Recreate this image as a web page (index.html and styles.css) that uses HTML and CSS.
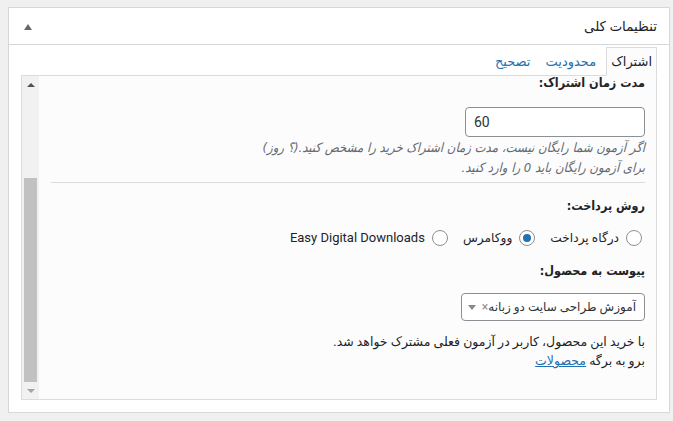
FILE: index.html
```html
<!DOCTYPE html>
<html lang="fa" dir="rtl">
<head>
<meta charset="utf-8">
<title>تنظیمات کلی</title>
<link rel="stylesheet" href="styles.css">
</head>
<body>
<div class="screen">
  <div class="postbox">
    <div class="postbox-header">
      <h2 class="hndle">تنظیمات کلی</h2>
      <span class="toggle" aria-hidden="true"></span>
    </div>
    <div class="inside">
      <ul class="tabs">
        <li class="tab active">اشتراک</li>
        <li class="tab"><a href="#">محدودیت</a></li>
        <li class="tab"><a href="#">تصحیح</a></li>
      </ul>
      <div class="panel">
        <div class="panel-content">
          <label class="field-label first">مدت زمان اشتراک:</label>
          <div class="input-row"><input class="num-input" type="text" value="60" dir="ltr"></div>
          <p class="description">اگر آزمون شما رایگان نیست، مدت زمان اشتراک خرید را مشخص کنید.(؟ روز)<br>برای آزمون رایگان باید 0 را وارد کنید.</p>
          <hr class="sep">
          <label class="field-label">روش پرداخت:</label>
          <div class="radios">
            <label class="radio-item"><span class="radio"></span>درگاه پرداخت</label>
            <label class="radio-item"><span class="radio checked"></span>ووکامرس</label>
            <label class="radio-item"><span class="radio"></span><span class="latin">Easy Digital Downloads</span></label>
          </div>
          <label class="field-label">پیوست به محصول:</label>
          <div class="select-row">
            <div class="select2">
              <span class="sel-text">آموزش طراحی سایت دو زبانه</span>
              <span class="sel-clear">×</span>
              <span class="sel-arrow"></span>
            </div>
          </div>
          <p class="note">با خرید این محصول، کاربر در آزمون فعلی مشترک خواهد شد.<br>برو به برگه <a href="#" class="link">محصولات</a></p>
        </div>
        <div class="scrollbar" aria-hidden="true">
          <div class="sb-btn"><span class="sb-up"></span></div>
          <div class="sb-track"><div class="sb-thumb"></div></div>
          <div class="sb-btn"><span class="sb-down"></span></div>
        </div>
      </div>
    </div>
  </div>
</div>
</body>
</html>
```
FILE: styles.css
```css
* { box-sizing: border-box; }
html, body { margin: 0; padding: 0; }
body {
  background: #f0f0f1;
  font-family: Roboto, "DejaVu Sans", sans-serif;
  font-size: 13px;
  color: #1d2327;
  width: 673px;
  height: 421px;
  overflow: hidden;
}
.screen {
  padding: 7px 0 0 8px;
  direction: ltr;
}
.postbox {
  direction: rtl;
  width: 662px;
  height: 406px;
  background: #fff;
  border: 1px solid #d6d7d9;
}
.postbox-header {
  height: 37px;
  border-bottom: 1px solid #d6d7d9;
  display: flex;
  align-items: center;
  justify-content: space-between;
  padding: 0 12px 0 15px;
}
.hndle {
  margin: 0;
  font-size: 13.5px;
  font-weight: 400;
  line-height: 20px;
  color: #1d2327;
}
.toggle {
  width: 0;
  height: 0;
  border-left: 4px solid transparent;
  border-right: 4px solid transparent;
  border-bottom: 6px solid #646970;
  margin-top: 1px;
}
.inside {
  padding: 2px 12px 12px 12px;
}
.tabs {
  list-style: none;
  margin: 0 0 -1px 0;
  padding: 0;
  display: flex;
  gap: 5px;
  position: relative;
  z-index: 1;
}
.tab {
  padding: 5px 4px;
  line-height: 17px;
  border: 1px solid transparent;
  font-size: 13px;
}
.tab.active {
  border-color: #dcdcde;
  border-bottom-color: #fcfcfc;
  background: #fcfcfc;
  color: #1d2327;
}
.tab a { color: #2271b1; text-decoration: none; }
.panel {
  height: 325px;
  border: 1px solid #dcdcde;
  background: #fcfcfc;
  display: flex;
  overflow: hidden;
}
.panel-content {
  flex: 1;
  padding: 0 11px 0 12px;
}
.field-label {
  display: block;
  font-family: "DejaVu Sans Condensed", "DejaVu Sans", sans-serif;
  font-weight: 700;
  font-size: 12.5px;
  line-height: 20px;
  color: #1d2327;
  margin-top: 13px;
}
.field-label.first { margin-top: -3px; }
.input-row { margin-top: 14px; }
.num-input {
  display: block;
  width: 180px;
  height: 30px;
  border: 1px solid #8c8f94;
  border-radius: 4px;
  background: #fff;
  font-family: Roboto, "DejaVu Sans", sans-serif;
  font-size: 14px;
  color: #2c3338;
  padding: 0 8px;
  text-align: left;
  margin: 0;
}
.description {
  margin: 1px 0 0 0;
  font-family: "DejaVu Sans Condensed", "DejaVu Sans", sans-serif;
  font-style: italic;
  color: #646970;
  line-height: 20px;
  font-size: 13px;
}
.sep {
  margin: 4px 0 0 0;
  border: 0;
  border-top: 1px solid #dcdcde;
  height: 0;
}
.radios {
  margin-top: 12px;
  display: flex;
  align-items: center;
  line-height: 20px;
  font-size: 12.2px;
}
.radio-item {
  display: flex;
  align-items: center;
  margin-left: 12px;
  color: #1d2327;
}
.radio {
  width: 16px;
  height: 16px;
  border: 1px solid #8c8f94;
  border-radius: 50%;
  background: #fff;
  margin: 0 3px 0 7px;
  display: flex;
  align-items: center;
  justify-content: center;
}
.radio.checked::after {
  content: "";
  width: 8px;
  height: 8px;
  border-radius: 50%;
  background: #2271b1;
}
.latin { font-family: Roboto, sans-serif; font-size: 13px; }
.select-row { margin-top: 12px; }
.select2 {
  width: 184px;
  height: 28px;
  border: 1px solid #8c8f94;
  border-radius: 4px;
  background: #fff;
  display: flex;
  align-items: center;
  padding: 0 8px 0 6px;
  color: #2c3338;
  font-size: 12px;
}
.sel-text { white-space: nowrap; }
.sel-clear {
  font-size: 12px;
  color: #8c8f94;
  line-height: 1;
}
.sel-arrow {
  width: 0;
  height: 0;
  border-left: 4px solid transparent;
  border-right: 4px solid transparent;
  border-top: 5px solid #888;
  margin-right: auto;
}
.note {
  margin: 11px 0 0 0;
  line-height: 19px;
  color: #1d2327;
  font-size: 12.5px;
}
.link { color: #2271b1; text-decoration: underline; }
.scrollbar {
  width: 17px;
  background: #f1f1f1;
  display: flex;
  flex-direction: column;
}
.sb-btn {
  height: 17px;
  display: flex;
  align-items: center;
  justify-content: center;
}
.sb-up {
  width: 0; height: 0;
  border-left: 4px solid transparent;
  border-right: 4px solid transparent;
  border-bottom: 4px solid #505050;
}
.sb-down {
  width: 0; height: 0;
  border-left: 4px solid transparent;
  border-right: 4px solid transparent;
  border-top: 4px solid #a3a3a3;
}
.sb-track {
  flex: 1;
  display: flex;
  flex-direction: column;
  justify-content: flex-end;
  align-items: center;
}
.sb-thumb {
  width: 13px;
  height: 204px;
  background: #c1c1c1;
}
```
